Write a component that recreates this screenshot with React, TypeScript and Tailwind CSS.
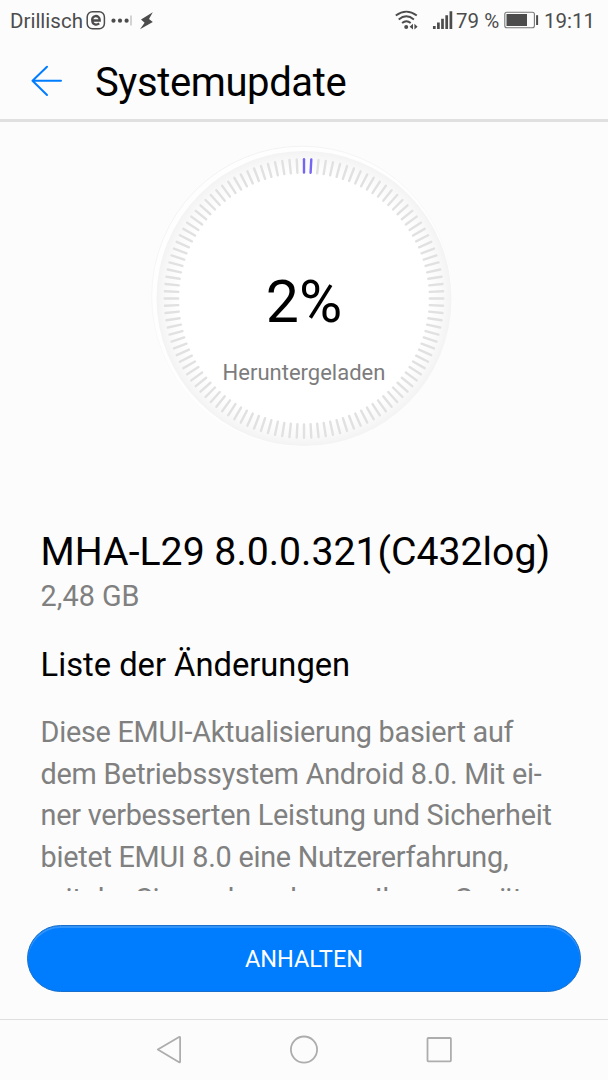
const TICKS = Array.from({ length: 120 }, (_, i) => i);

const CHANGES = [
  "Diese EMUI-Aktualisierung basiert auf",
  "dem Betriebssystem Android 8.0. Mit ei-",
  "ner verbesserten Leistung und Sicherheit",
  "bietet EMUI 8.0 eine Nutzererfahrung,",
  "mit der Sie noch mehr aus Ihrem Gerät",
];

function StatusBar() {
  return (
    <div className="flex h-[42px] items-center justify-between pl-[10px] pr-[15px] text-[20.5px] leading-[42px] text-[#4c4c4c]">
      <div className="flex items-center">
        <span className="w-[75px] whitespace-nowrap">Drillisch</span>
        <svg width="70" height="24" viewBox="85 9 70 24" fill="none">
          <rect x="87.2" y="11.8" width="17.2" height="17" rx="5.2" stroke="#4c4c4c" strokeWidth="1.5" />
          <path d="M92.2 20.5h7.5v-.8a3.8 3.8 0 1 0-7.4 1.3c.2 3.8 4.3 4.5 6.9 2.4" stroke="#4c4c4c" strokeWidth="2.3" />
          <circle cx="113.5" cy="20.7" r="2.1" fill="#4c4c4c" />
          <circle cx="120" cy="20.7" r="2.1" fill="#4c4c4c" />
          <circle cx="126.6" cy="20.7" r="2.1" fill="#4c4c4c" />
          <path d="M131 15.5v10" stroke="#aaa" strokeWidth="1" />
          <path d="M152.8 12.3l-11.8 7.2 3.6 3.2-4.6 6.6 12.8-7.2-3.8-3.1z" fill="#4c4c4c" />
        </svg>
      </div>
      <div className="flex items-center">
        <svg width="60" height="24" viewBox="396 9 60 24" fill="none" stroke="#4c4c4c">
          <path d="M396.8 15.5q10.5-7.8 21 0M399.7 19.4q7.6-6.1 15.2 0M403.1 23.1q4.3-3.6 8.6 0" strokeWidth="1.9" />
          <circle cx="407.2" cy="26.9" r="2" fill="#4c4c4c" stroke="none" />
          <path d="M414 23.8v5.8l-3.4-2.9zM415.4 23.8v5.8l3.2-2.9z" fill="#4c4c4c" stroke="none" />
          <path d="M435.3 26v3M439.4 22.4v6.6M443.5 18.7V29M447.7 15.2V29M451.9 11.2V29" strokeWidth="2.7" />
        </svg>
        <span className="-mt-px ml-px w-[47px] whitespace-nowrap text-[20.5px] leading-[40px]">79 %</span>
        <svg width="36" height="24" viewBox="503 9 36 24" fill="none">
          <rect x="504.8" y="12.3" width="29.6" height="15.4" rx="2" stroke="#777" strokeWidth="1.1" />
          <rect x="506.5" y="14" width="20.5" height="12" fill="#4c4c4c" />
          <path d="M537.1 15.2v9.8" stroke="#4c4c4c" strokeWidth="2" />
        </svg>
        <span className="ml-[5px] w-[49px] whitespace-nowrap">19:11</span>
      </div>
    </div>
  );
}

function Header() {
  return (
    <header className="flex h-[80px] items-center border-b-[3px] border-[#e0e0e0] pl-[31px]">
      <svg width="32" height="34" viewBox="31 64 32 34" fill="none" stroke="#007dff" strokeWidth="2" strokeLinecap="round" strokeLinejoin="round">
        <path d="M61 80.8H32.5M47 66.8l-14.5 14L47 95" />
      </svg>
      <h1 className="ml-[32px] pt-[5px] text-[40px] leading-[48px] tracking-[-0.38px]">Systemupdate</h1>
    </header>
  );
}

function ProgressDial() {
  return (
    <div className="mt-[20px] ml-[148px] grid h-[310px] w-[312px]">
      <svg className="col-start-1 row-start-1" width="312" height="310" viewBox="148 142 312 310">
        <defs>
          <radialGradient id="dial" gradientUnits="userSpaceOnUse" cx="304" cy="298.5" r="147.5">
            <stop offset="0.84" stopColor="#ffffff" />
            <stop offset="0.93" stopColor="#fafafa" />
            <stop offset="1" stopColor="#f3f3f3" />
          </radialGradient>
          <linearGradient id="rim" x1="0.2" y1="0" x2="0.7" y2="1">
            <stop offset="0" stopColor="#f1f1f1" />
            <stop offset="0.7" stopColor="#fcfcfc" />
          </linearGradient>
        </defs>
        <circle cx="302" cy="296.5" r="150.3" fill="#fefefe" stroke="url(#rim)" />
        <circle cx="304" cy="298.5" r="147.5" fill="url(#dial)" />
        {TICKS.map((i) => (
          <path
            key={i}
            d="M304 159.2v13.4"
            transform={`rotate(${i * 3} 304 298.5)`}
            stroke={i < 2 ? "#7565f5" : "#e1e1e1"}
            strokeWidth="2.4"
            strokeLinecap="round"
          />
        ))}
      </svg>
      <div className="col-start-1 row-start-1 flex flex-col items-center pt-[125px]">
        <div className="text-[59px] leading-[70px]">2%</div>
        <div className="mt-[21px] text-[22px] leading-[30px] text-[#7c7c7c]">Heruntergeladen</div>
      </div>
    </div>
  );
}

function NavBar() {
  return (
    <nav className="flex h-[61px] items-center border-t border-[#dfdfdf]">
      <svg width="608" height="60" viewBox="0 1020 608 60" fill="none" stroke="#adadad" strokeWidth="1.8" strokeLinejoin="round">
        <path d="M157.8 1049.6l21.3-12.6q1-.3 1 .8v23.6q0 1.2-1 .8z" />
        <circle cx="304" cy="1049.6" r="13.1" />
        <rect x="427.5" y="1038" width="23.4" height="23.3" rx="0.8" />
      </svg>
    </nav>
  );
}

export default function App() {
  return (
    <div className="flex h-[1080px] w-[608px] flex-col overflow-hidden bg-[#fcfcfc] font-[Roboto,sans-serif] text-black">
      <StatusBar />
      <Header />
      <main className="flex h-[769px] flex-col overflow-hidden">
        <ProgressDial />
        <section className="mt-[76px] pl-[40.6px]">
          <h2 className="text-[39.2px] leading-[48px]">MHA-L29 8.0.0.321(C432log)</h2>
          <p className="mt-[2px] text-[28.8px] leading-[36px] text-[#808080]">2,48 GB</p>
          <h3 className="mt-[31px] text-[32.7px] leading-[40px]">Liste der Änderungen</h3>
          <div className="mt-[27px] text-[28.8px] leading-[41.7px] tracking-[-0.26px] text-[#808080]">
            {CHANGES.map((line) => (
              <p key={line} className="whitespace-nowrap">
                {line}
              </p>
            ))}
          </div>
        </section>
      </main>
      <div className="h-[128px] px-[27px] pt-[34px]">
        <button className="block h-[67px] w-full rounded-full border border-[#1870cc] bg-[#007dff] pt-[2px] text-[23.5px] text-white shadow-[inset_0_2px_0_#3294f8]">
          ANHALTEN
        </button>
      </div>
      <NavBar />
    </div>
  );
}
